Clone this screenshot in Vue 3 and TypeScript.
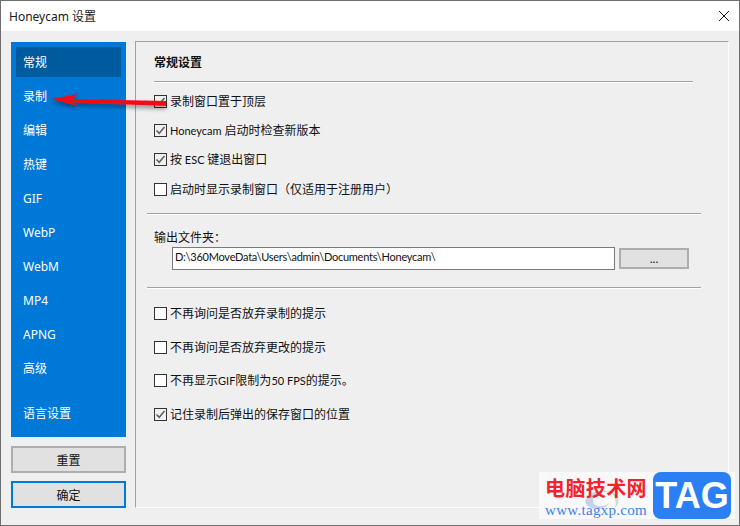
<script setup lang="ts">
interface Option {
  label: string;
  checked: boolean;
  gap: number;
}
const navItems: string[] = ['常规', '录制', '编辑', '热键', 'GIF', 'WebP', 'WebM', 'MP4', 'APNG', '高级'];
const topOptions: Option[] = [
  { label: '录制窗口置于顶层', checked: true, gap: 9 },
  { label: 'Honeycam 启动时检查新版本', checked: true, gap: 11 },
  { label: '按 ESC 键退出窗口', checked: true, gap: 11 },
  { label: '启动时显示录制窗口（仅适用于注册用户）', checked: false, gap: 12 },
];
const bottomOptions: Option[] = [
  { label: '不再询问是否放弃录制的提示', checked: false, gap: 15 },
  { label: '不再询问是否放弃更改的提示', checked: false, gap: 16 },
  { label: '不再显示GIF限制为50 FPS的提示。', checked: false, gap: 15 },
  { label: '记住录制后弹出的保存窗口的位置', checked: true, gap: 16 },
];
// Latin runs are set slightly smaller than the CJK text around them.
function runs(label: string): { text: string; latin: boolean }[] {
  return label
    .split(/([A-Za-z0-9 ]+)/)
    .filter((t) => t.length > 0)
    .map((text) => ({ text, latin: /^[A-Za-z0-9 ]+$/.test(text) }));
}
</script>

<template>
  <div class="win">
    <header class="titlebar">
      <span class="title">Honeycam 设置</span>
      <svg class="close" width="12" height="12" viewBox="0 0 12 12">
        <path d="M1 1l10 10M11 1L1 11" stroke="#111" stroke-width="1" fill="none" />
      </svg>
    </header>
    <div class="body">
      <aside class="left">
        <nav class="nav">
          <div v-for="(item, i) in navItems" :key="item" class="nav-item" :class="{ active: i === 0 }">{{ item }}</div>
          <div class="nav-item lang">语言设置</div>
        </nav>
        <button class="btn side-btn">重置</button>
        <button class="btn side-btn primary">确定</button>
      </aside>
      <main class="panel">
        <h2 class="heading">常规设置</h2>
        <div class="sep first"></div>
        <label v-for="o in topOptions" :key="o.label" class="opt" :style="{ marginTop: o.gap + 'px' }">
          <span class="box" :class="{ on: o.checked }">
            <svg v-if="o.checked" width="11" height="11" viewBox="0 0 11 11">
              <path d="M1.5 5.5l2.7 2.8L9.5 2" stroke="#5f5f5f" stroke-width="1.5" fill="none" />
            </svg>
          </span>
          <span class="opt-text"><span v-for="(r, i) in runs(o.label)" :key="i" :class="{ latin: r.latin }">{{ r.text }}</span></span>
        </label>
        <div class="sep wide s2"></div>
        <div class="folder-label">输出文件夹：</div>
        <div class="folder-row">
          <div class="path">D:\360MoveData\Users\admin\Documents\Honeycam\</div>
          <button class="btn dots">...</button>
        </div>
        <div class="sep wide s3"></div>
        <label v-for="o in bottomOptions" :key="o.label" class="opt" :style="{ marginTop: o.gap + 'px' }">
          <span class="box" :class="{ on: o.checked }">
            <svg v-if="o.checked" width="11" height="11" viewBox="0 0 11 11">
              <path d="M1.5 5.5l2.7 2.8L9.5 2" stroke="#5f5f5f" stroke-width="1.5" fill="none" />
            </svg>
          </span>
          <span class="opt-text"><span v-for="(r, i) in runs(o.label)" :key="i" :class="{ latin: r.latin }">{{ r.text }}</span></span>
        </label>
      </main>
    </div>

    <svg class="arrow" width="130" height="24" viewBox="0 0 130 24">
      <defs>
        <filter id="arrowShadow" x="-10%" y="-50%" width="120%" height="220%">
          <feDropShadow dx="0" dy="3" stdDeviation="2" flood-color="#000" flood-opacity="0.4" />
        </filter>
      </defs>
      <path d="M5 8 L32 3 L27 8 L120 10 L120 15 L27 11.5 L32 15 Z" fill="#ee0f18" filter="url(#arrowShadow)" />
    </svg>

    <div class="mark">
      <svg class="mark-swirl" width="44" height="26" viewBox="0 0 44 26">
        <path d="M4 16C6 6 20 2 30 6C22 5 12 8 12 15C12 21 22 22 28 17C25 24 8 26 4 16Z" fill="#7fa8c9" opacity="0.45" />
        <path d="M30 6C38 9 40 17 34 22C36 16 34 10 30 6Z" fill="#8fcf8f" opacity="0.5" />
      </svg>
      <div class="mark-text">
        <div class="mark-cn">电脑技术网</div>
        <div class="mark-url">www.tagxp.com</div>
      </div>
      <div class="mark-tag">TAG</div>
    </div>
  </div>
</template>

<style>
html, body { margin: 0; background: #efefef; }
</style>

<style scoped>
.win {
  position: relative;
  width: 740px;
  height: 526px;
  box-sizing: border-box;
  border: 1px solid #6e6e6e;
  background: #efefef;
  display: flex;
  flex-direction: column;
  overflow: hidden;
  font-family: "Lato", "Noto Sans CJK SC", sans-serif;
  font-size: 12px;
  color: #111;
}
.titlebar {
  height: 30px;
  flex: none;
  background: #fff;
  display: flex;
  align-items: center;
  justify-content: space-between;
  padding: 0 9px 0 8px;
}
.title { font-family: "Noto Sans", "Noto Sans CJK SC", sans-serif; font-size: 12px; color: #1a1a1a; }
.body {
  flex: 1;
  display: flex;
  gap: 9px;
  padding: 10px 10px 0 10px;
  min-height: 0;
}
.left { width: 115px; flex: none; display: flex; flex-direction: column; padding-top: 1px; }
.nav {
  height: 395px;
  box-sizing: border-box;
  background: #0078d7;
  padding: 5px;
  display: flex;
  flex-direction: column;
  gap: 4px;
}
.nav-item {
  height: 30px;
  flex: none;
  line-height: 32px;
  padding-left: 7px;
  color: #fff;
  font-family: "Noto Sans", "Noto Sans CJK SC", sans-serif;
  font-size: 12px;
}
.nav-item.active { background: #005a9e; }
.nav-item.lang { margin-top: 11px; }
.btn {
  font: inherit;
  color: #111;
  background: #e1e1e1;
  border: 2px solid #adadad;
  box-sizing: border-box;
  padding: 0;
}
.side-btn { height: 27px; width: 115px; margin-top: 9px; flex: none; }
.side-btn.primary { margin-top: 8px; border-color: #0078d7; }
.panel {
  width: 594px;
  height: 467px;
  box-sizing: border-box;
  flex: none;
  border-style: solid;
  border-width: 1px;
  border-color: #a0a0a0 #fff #fff #a0a0a0;
  padding: 11px 0 0 11px;
  display: flex;
  flex-direction: column;
  align-items: flex-start;
}
.heading { margin: 0 0 0 7px; height: 18px; line-height: 20px; font-size: 12px; font-weight: 700; }
.sep { height: 1px; background: #a0a0a0; border-bottom: 1px solid #fff; flex: none; }
.sep.first { width: 539px; margin: 10px 0 0 7px; }
.sep.wide { width: 554px; }
.sep.s2 { margin-top: 15px; }
.sep.s3 { margin-top: 17px; }
.opt {
  display: flex;
  align-items: center;
  gap: 3px;
  height: 18px;
  margin-left: 7px;
  line-height: 18px;
  white-space: nowrap;
}
.opt-text { margin-top: 2px; }
.latin { font-size: 11px; }
.box {
  width: 13px;
  height: 13px;
  box-sizing: border-box;
  border: 1px solid #333;
  background: #fff;
  display: flex;
  align-items: center;
  justify-content: center;
  flex: none;
}
.box.on { background: #f0f0f0; }
.folder-label { margin: 13px 0 0 7px; height: 18px; line-height: 20px; }
.folder-row { display: flex; align-items: center; margin: 1px 0 0 25px; gap: 4px; }
.path {
  width: 443px;
  height: 23px;
  box-sizing: border-box;
  border: 1px solid #7a7a7a;
  background: #fff;
  padding-left: 2px;
  line-height: 18px;
  font-size: 11px;
  letter-spacing: -0.25px;
  white-space: nowrap;
}
.dots { width: 70px; height: 21px; line-height: 17px; }
.close { flex: none; }
.arrow { position: absolute; left: 45px; top: 90px; }
.mark {
  position: absolute;
  left: 538px;
  top: 471px;
  width: 196px;
  height: 47px;
  background: rgba(250, 250, 250, 0.92);
  display: flex;
  justify-content: space-between;
}
.mark-swirl { position: absolute; left: 42px; top: 14px; }
.mark-text { position: relative; padding: 3px 0 0 6px; }
.mark-cn { font-size: 20px; line-height: 26px; font-weight: 700; font-family: "Noto Sans CJK SC", sans-serif; color: #f5222d; letter-spacing: 0.4px; white-space: nowrap; }
.mark-url { font-family: "Liberation Serif", serif; font-size: 15px; line-height: 18px; color: #3b82f0; white-space: nowrap; letter-spacing: 0.3px; }
.mark-tag {
  position: relative;
  width: 78px;
  margin-right: 4px;
  border-radius: 8px;
  background: #2b7ff5;
  color: #fff;
  font-family: "Liberation Sans", sans-serif;
  font-weight: 700;
  font-size: 36px;
  line-height: 48px;
  text-align: center;
}
</style>
